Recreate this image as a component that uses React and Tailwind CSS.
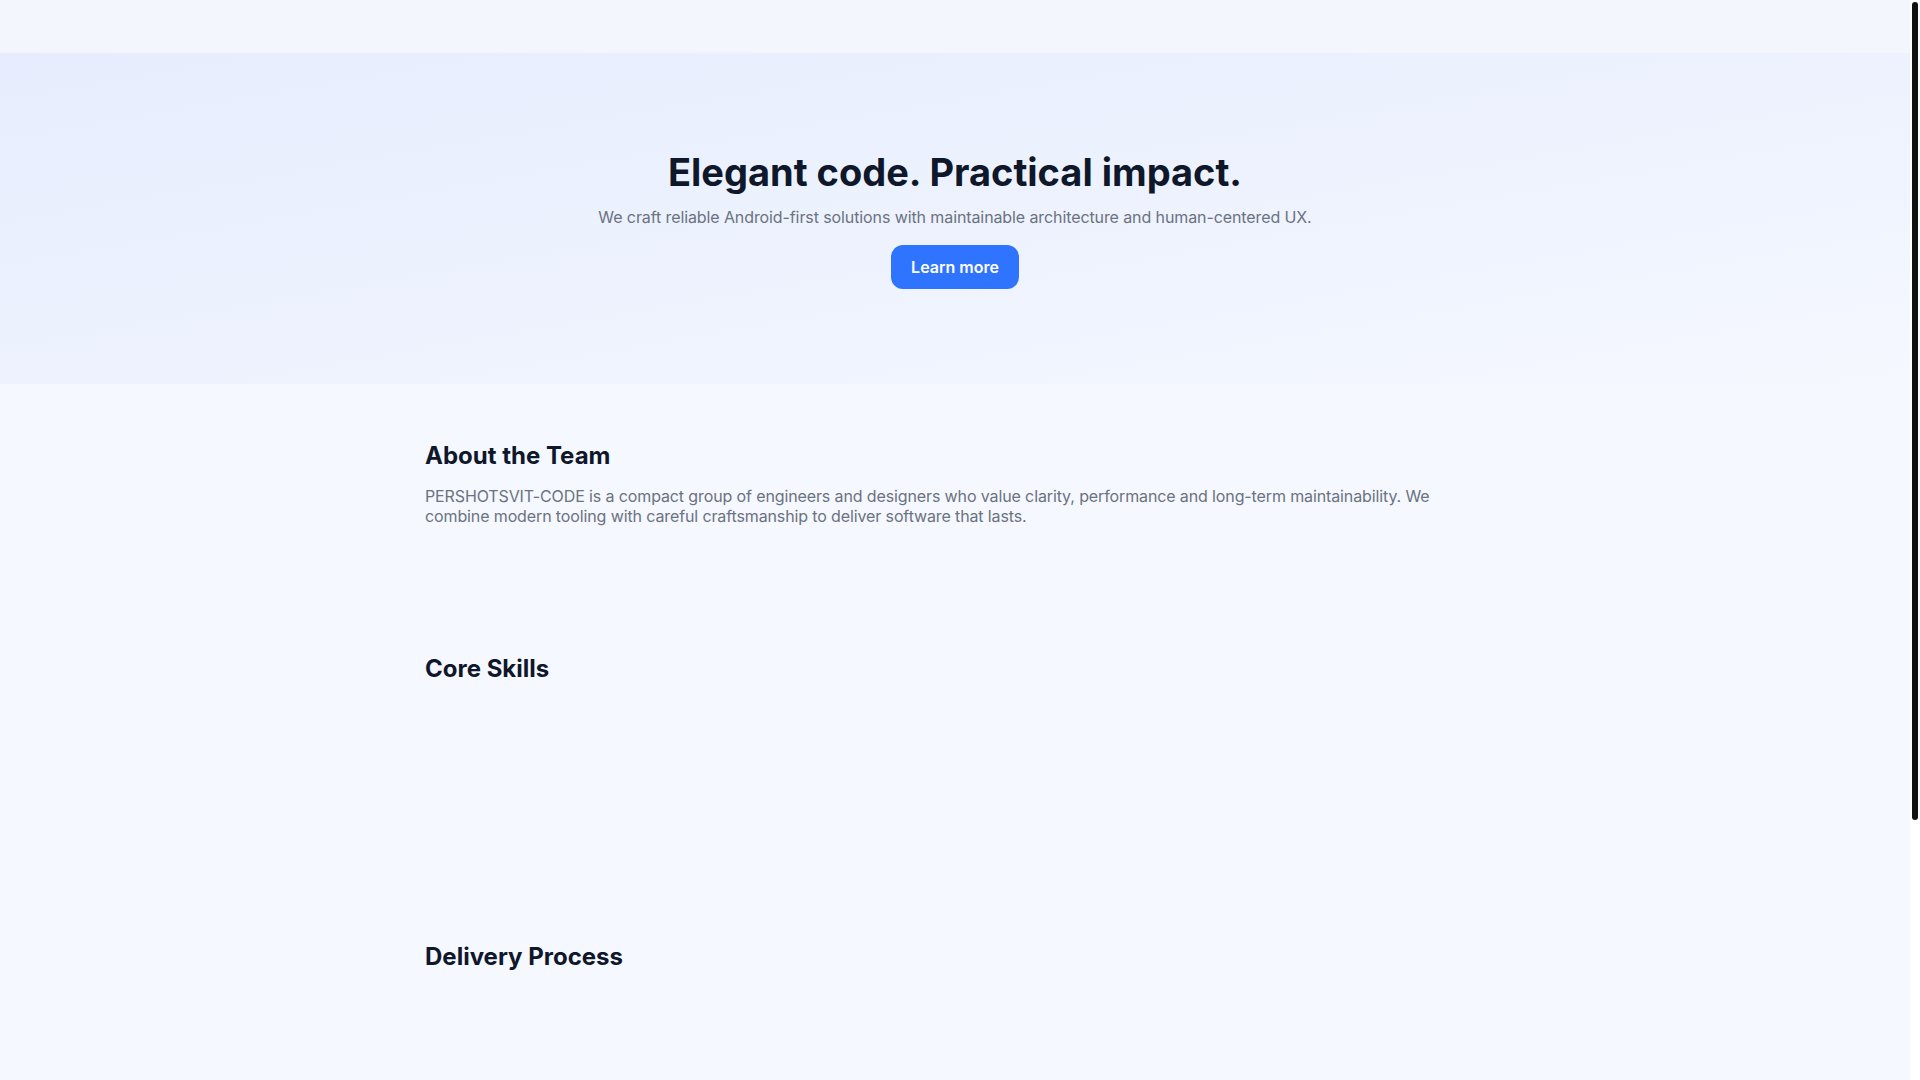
export default function App() {
  return (
    <div
      className="flex h-screen overflow-hidden bg-[#f5f8ff] text-[#0f172a]"
      style={{ fontFamily: 'Inter, "Noto Sans", sans-serif' }}
    >
      <div className="min-w-0 flex-1">
        <header className="h-[53px] bg-[#f3f6fd]" />

        <section className="bg-gradient-to-br from-[#e7edfe] via-[#edf2fe] to-[#f5f8ff] pt-[99px] pb-[95px] text-center">
          <h1 className="text-[38px] font-bold leading-10 text-[#0f172a]">Elegant code. Practical impact.</h1>
          <p className="mt-[13px] text-base leading-6 tracking-[-0.1px] text-[#6b7280]">
            We craft reliable Android-first solutions with maintainable architecture and human-centered UX.
          </p>
          <button className="mt-4 rounded-xl bg-[#2e74ff] px-5 py-2.5 text-base font-semibold text-white">
            Learn more
          </button>
        </section>

        <main className="mx-auto max-w-[1060px]">
          <section className="pt-[56px]">
            <h2 className="text-2xl font-bold leading-8">About the Team</h2>
            <p className="mt-[14px] text-base leading-5 tracking-[-0.12px] text-[#6b7280]">
              PERSHOTSVIT-CODE is a compact group of engineers and designers who value clarity, performance and
              long-term maintainability. We combine modern tooling with careful craftsmanship to deliver software
              that lasts.
            </p>
          </section>

          <section className="pt-[127px]">
            <h2 className="text-2xl font-bold leading-8">Core Skills</h2>
            <div className="h-[256px]" />
          </section>

          <section>
            <h2 className="text-2xl font-bold leading-8">Delivery Process</h2>
          </section>
        </main>
      </div>

      {/* scrollbar */}
      <aside className="w-[10px] shrink-0 bg-white pt-[2px]">
        <div className="mx-[2px] h-[818px] rounded-full bg-[#111111]" />
      </aside>
    </div>
  )
}
